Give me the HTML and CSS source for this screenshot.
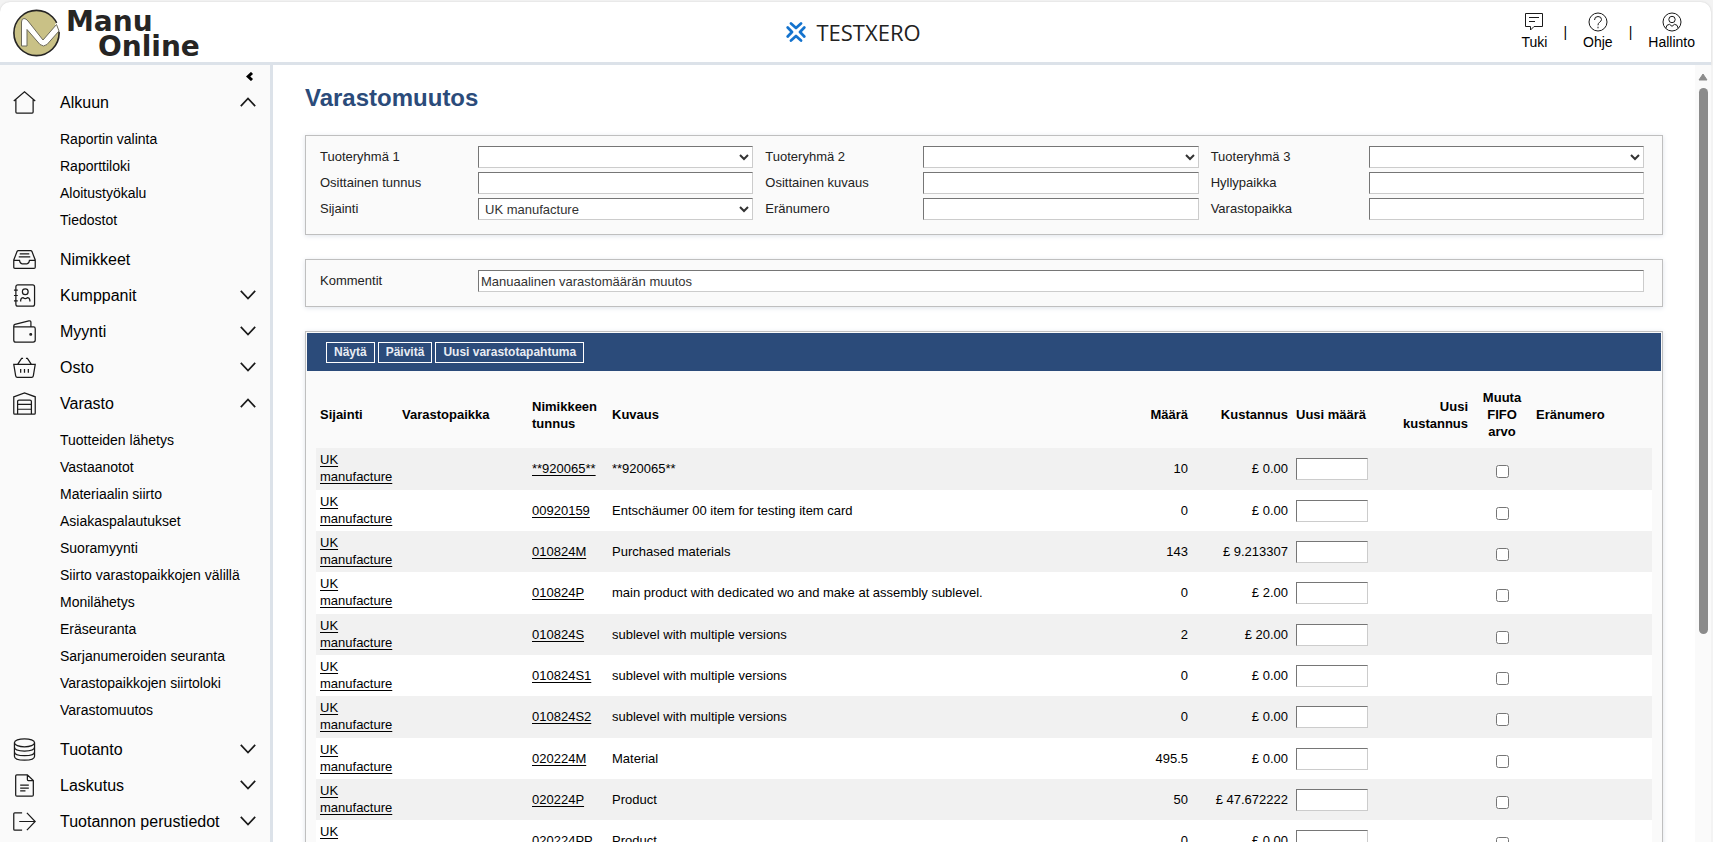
FILE: index.html
```html
<!DOCTYPE html>
<html lang="fi">
<head>
<meta charset="utf-8">
<title>Varastomuutos</title>
<link rel="stylesheet" href="styles.css">
</head>
<body>
<svg class="defs" aria-hidden="true">
  <symbol id="down" viewBox="0 0 16 10"><path d="M.8 .8 8 8.6 15.2 .8"/></symbol>
  <symbol id="up" viewBox="0 0 16 10"><path d="M.8 9.200 8 1.400 15.200 9.200"/></symbol>
</svg>
<div class="app">
  <header class="top">
    <a class="brand" href="#" aria-label="Manu Online">
      <svg width="48" height="48" viewBox="0 0 48 48" aria-hidden="true">
        <circle cx="24.500" cy="24" r="22.600" fill="#c9c186" stroke="#262524" stroke-width="1.600"/>
        <path d="M43 15 49 11V23.500L45 21z" fill="#fff" stroke="none"/>
        <path d="M9.500 37V13Q9.500 9.500 12 9.500 14 9.500 16 12L31 31 44.500 15.500 47 22 35 35.500Q31.500 38.500 28 35.500L15 20.500V37z" fill="#fff" stroke="#6d6a5a" stroke-width="1"/>
      </svg>
      <span class="brand-name"><span>Manu</span><span class="brand-second">Online</span></span>
    </a>
    <div class="company">
      <svg class="company-mark" width="20" height="20" viewBox="0 0 20 20" aria-hidden="true">
        <path d="M5 1.500 10 6 15 1.500M5 18.500 10 14 15 18.500"/>
        <path d="M1.700 5.500 6 10 1.700 14.500M18.300 5.500 14 10 18.300 14.500"/>
      </svg>
      <span>TESTXERO</span>
    </div>
    <nav class="tools">
      <a href="#"><svg width="20" height="20" viewBox="0 0 20 20"><path d="M1.500 1.500h17v13h-8.500L6.500 18v-3.500h-5z"/><path d="M5 5.500h10M5 9.500h6"/></svg>Tuki</a>
      <span>|</span>
      <a href="#"><svg width="20" height="20" viewBox="0 0 20 20"><circle cx="10" cy="10" r="9"/><path d="M6.500 8q0-3.500 3.500-3.500T13.500 7.500Q13.500 9 11.500 10.300 10 11.300 10 13.300M10 14.700v1.600"/></svg>Ohje</a>
      <span>|</span>
      <a href="#"><svg width="20" height="20" viewBox="0 0 20 20"><circle cx="10" cy="10" r="9"/><circle cx="10" cy="7.500" r="3.200"/><path d="M3.800 16.300Q4.300 12.300 7.500 12.300L10 14.300 12.500 12.300Q15.700 12.300 16.200 16.300"/></svg>Hallinto</a>
    </nav>
  </header>
  <div class="body">
    <aside class="side">
      <button class="collapse" aria-label="Piilota valikko"><svg width="8" height="9" viewBox="0 0 8 9"><path d="M6 1 2.200 4.500 6 8"/></svg></button>
      <nav>
        <a class="item" href="#"><svg class="ico" viewBox="0 0 24 24"><path d="M.8 10.500 12 .9 23.200 10.500M3 8.700V22q0 1 1 1H20q1 0 1-1V8.700"/></svg>Alkuun<svg class="chev"><use href="#up"/></svg></a>
        <div class="sub">
          <a href="#">Raportin valinta</a>
          <a href="#">Raporttiloki</a>
          <a href="#">Aloitustyökalu</a>
          <a href="#">Tiedostot</a>
        </div>
        <a class="item" href="#"><svg class="ico" viewBox="0 0 24 24"><path d="M.8 12.500 4.300 3.500Q4.700 2.700 5.500 2.700H18.500Q19.300 2.700 19.700 3.500L23.200 12.500V20Q23.200 21.200 22 21.200H2Q.8 21.200 .8 20zM.8 12.800H6.800Q7.200 16.500 9.500 16.500H14.500Q16.800 16.500 17.200 12.800H23.200"/><path d="M7 6.200h10M6 9.300h12"/></svg>Nimikkeet</a>
        <a class="item" href="#"><svg class="ico" viewBox="0 0 24 24"><rect x="3" y=".8" width="19.500" height="22.400" rx="2"/><path d="M1 6.500h4M1 12h4M1 17.500h4"/><circle cx="12.800" cy="8" r="3"/><path d="M8 18.300v-1.500q.4-2.500 2.600-2.500 2.200 1.700 4.400 0 2.200 0 2.600 2.500v1.500"/></svg>Kumppanit<svg class="chev"><use href="#down"/></svg></a>
        <a class="item" href="#"><svg class="ico" viewBox="0 0 24 24"><path d="M.8 7.300H21.500Q23.200 7.300 23.200 9V20.800Q23.200 23 21 23H3Q.8 23 .8 21V6.300Q.8 5 2 4.600L16.500 .9Q18.700 .6 18.700 2.500V7.300"/><circle cx="18.500" cy="15" r=".9"/></svg>Myynti<svg class="chev"><use href="#down"/></svg></a>
        <a class="item" href="#"><svg class="ico" viewBox="0 0 24 24"><path d="M.8 8.800H23.200L21.200 20.700Q20.900 22.200 19.500 22.200H4.500Q3.100 22.200 2.800 20.700zM5 8.500 9 2.500H10.500M19 8.500 15 2.500H13.500M8 13.500v4M12 13.500v4M16 13.500v4"/></svg>Osto<svg class="chev"><use href="#down"/></svg></a>
        <a class="item" href="#"><svg class="ico" viewBox="0 0 24 24"><path d="M.8 5 12 .9 23.200 5V22.200Q23.200 23.200 22.200 23.200H1.800Q.8 23.200 .8 22.200zM4.800 23V10q0-1.500 1.500-1.500H17.700q1.500 0 1.500 1.500V23M4.800 13h14.400M4.800 18h14.400"/></svg>Varasto<svg class="chev"><use href="#up"/></svg></a>
        <div class="sub">
          <a href="#">Tuotteiden lähetys</a>
          <a href="#">Vastaanotot</a>
          <a href="#">Materiaalin siirto</a>
          <a href="#">Asiakaspalautukset</a>
          <a href="#">Suoramyynti</a>
          <a href="#">Siirto varastopaikkojen välillä</a>
          <a href="#">Monilähetys</a>
          <a href="#">Eräseuranta</a>
          <a href="#">Sarjanumeroiden seuranta</a>
          <a href="#">Varastopaikkojen siirtoloki</a>
          <a href="#">Varastomuutos</a>
        </div>
        <a class="item" href="#"><svg class="ico" viewBox="0 0 24 24"><ellipse cx="12" cy="5" rx="10.500" ry="4.200"/><path d="M1.500 5V19C1.500 24.600 22.500 24.600 22.500 19V5M1.500 9.500C1.500 15.100 22.500 15.100 22.500 9.500M1.500 14.300C1.500 19.900 22.500 19.900 22.500 14.300"/></svg>Tuotanto<svg class="chev"><use href="#down"/></svg></a>
        <a class="item" href="#"><svg class="ico" viewBox="0 0 24 24"><path d="M15 .8H4Q2.800 .8 2.800 2V22Q2.800 23.200 4 23.200H20Q21.200 23.200 21.200 22V6.800zM15 .8V5.800Q15 6.800 16 6.800H21.200M7.500 11.700h9M7.500 14.700h9M7.500 17.700h5.500"/></svg>Laskutus<svg class="chev"><use href="#down"/></svg></a>
        <a class="item" href="#"><svg class="ico" viewBox="0 0 24 24"><path d="M9.500 3H1.800Q.8 3 .8 4V20Q.8 21 1.800 21H9.500M6.500 12H23M14.500 3 23.200 12 14.500 21"/></svg>Tuotannon perustiedot<svg class="chev"><use href="#down"/></svg></a>
      </nav>
    </aside>
    <main class="main">
      <h1>Varastomuutos</h1>
      <form class="panel filters">
        <div class="field"><label for="g1">Tuoteryhmä 1</label><select id="g1"><option></option></select></div>
        <div class="field"><label for="g2">Tuoteryhmä 2</label><select id="g2"><option></option></select></div>
        <div class="field"><label for="g3">Tuoteryhmä 3</label><select id="g3"><option></option></select></div>
        <div class="field"><label for="pt">Osittainen tunnus</label><input type="text" id="pt"></div>
        <div class="field"><label for="pk">Osittainen kuvaus</label><input type="text" id="pk"></div>
        <div class="field"><label for="hp">Hyllypaikka</label><input type="text" id="hp"></div>
        <div class="field"><label for="sj">Sijainti</label><select id="sj"><option>UK manufacture</option></select></div>
        <div class="field"><label for="en">Eränumero</label><input type="text" id="en"></div>
        <div class="field"><label for="vp">Varastopaikka</label><input type="text" id="vp"></div>
      </form>
      <form class="panel">
        <div class="field"><label for="km">Kommentit</label><input type="text" id="km" value="Manuaalinen varastomäärän muutos"></div>
      </form>
      <section class="panel list">
        <div class="bar">
          <button>Näytä</button>
          <button>Päivitä</button>
          <button>Uusi varastotapahtuma</button>
        </div>
        <table>
          <colgroup><col class="c-loc"><col class="c-bin"><col class="c-code"><col><col class="c-num"><col class="c-num"><col class="c-new"><col class="c-num"><col class="c-fifo"><col class="c-batch"></colgroup>
          <thead>
            <tr><th>Sijainti</th><th>Varastopaikka</th><th>Nimikkeen tunnus</th><th>Kuvaus</th><th class="num">Määrä</th><th class="num">Kustannus</th><th>Uusi määrä</th><th class="num">Uusi kustannus</th><th class="mid">Muuta FIFO arvo</th><th>Eränumero</th></tr>
          </thead>
          <tbody>
            <tr><td><a href="#">UK manufacture</a></td><td></td><td><a href="#">**920065**</a></td><td>**920065**</td><td class="num">10</td><td class="num">£ 0.00</td><td><input type="text" aria-label="Uusi määrä"></td><td></td><td><input type="checkbox" aria-label="Muuta FIFO arvo"></td><td></td></tr>
            <tr><td><a href="#">UK manufacture</a></td><td></td><td><a href="#">00920159</a></td><td>Entschäumer 00 item for testing item card</td><td class="num">0</td><td class="num">£ 0.00</td><td><input type="text" aria-label="Uusi määrä"></td><td></td><td><input type="checkbox" aria-label="Muuta FIFO arvo"></td><td></td></tr>
            <tr><td><a href="#">UK manufacture</a></td><td></td><td><a href="#">010824M</a></td><td>Purchased materials</td><td class="num">143</td><td class="num">£ 9.213307</td><td><input type="text" aria-label="Uusi määrä"></td><td></td><td><input type="checkbox" aria-label="Muuta FIFO arvo"></td><td></td></tr>
            <tr><td><a href="#">UK manufacture</a></td><td></td><td><a href="#">010824P</a></td><td>main product with dedicated wo and make at assembly sublevel.</td><td class="num">0</td><td class="num">£ 2.00</td><td><input type="text" aria-label="Uusi määrä"></td><td></td><td><input type="checkbox" aria-label="Muuta FIFO arvo"></td><td></td></tr>
            <tr><td><a href="#">UK manufacture</a></td><td></td><td><a href="#">010824S</a></td><td>sublevel with multiple versions</td><td class="num">2</td><td class="num">£ 20.00</td><td><input type="text" aria-label="Uusi määrä"></td><td></td><td><input type="checkbox" aria-label="Muuta FIFO arvo"></td><td></td></tr>
            <tr><td><a href="#">UK manufacture</a></td><td></td><td><a href="#">010824S1</a></td><td>sublevel with multiple versions</td><td class="num">0</td><td class="num">£ 0.00</td><td><input type="text" aria-label="Uusi määrä"></td><td></td><td><input type="checkbox" aria-label="Muuta FIFO arvo"></td><td></td></tr>
            <tr><td><a href="#">UK manufacture</a></td><td></td><td><a href="#">010824S2</a></td><td>sublevel with multiple versions</td><td class="num">0</td><td class="num">£ 0.00</td><td><input type="text" aria-label="Uusi määrä"></td><td></td><td><input type="checkbox" aria-label="Muuta FIFO arvo"></td><td></td></tr>
            <tr><td><a href="#">UK manufacture</a></td><td></td><td><a href="#">020224M</a></td><td>Material</td><td class="num">495.5</td><td class="num">£ 0.00</td><td><input type="text" aria-label="Uusi määrä"></td><td></td><td><input type="checkbox" aria-label="Muuta FIFO arvo"></td><td></td></tr>
            <tr><td><a href="#">UK manufacture</a></td><td></td><td><a href="#">020224P</a></td><td>Product</td><td class="num">50</td><td class="num">£ 47.672222</td><td><input type="text" aria-label="Uusi määrä"></td><td></td><td><input type="checkbox" aria-label="Muuta FIFO arvo"></td><td></td></tr>
            <tr><td><a href="#">UK manufacture</a></td><td></td><td><a href="#">020224PP</a></td><td>Product</td><td class="num">0</td><td class="num">£ 0.00</td><td><input type="text" aria-label="Uusi määrä"></td><td></td><td><input type="checkbox" aria-label="Muuta FIFO arvo"></td><td></td></tr>
          </tbody>
        </table>
      </section>
    </main>
    <div class="scroll" aria-hidden="true">
      <svg width="10" height="8" viewBox="0 0 10 8"><path d="M5 1 9 7H1z"/></svg>
      <div class="thumb"></div>
    </div>
  </div>
</div>
</body>
</html>
```

FILE: styles.css
```css
* { box-sizing: border-box; }
body {
  margin: 0;
  background: #f3f3f3;
  color: #000;
  font: 13px/17px "Liberation Sans", Arial, sans-serif;
}
a { color: inherit; text-decoration: none; }
svg { flex: none; fill: none; stroke: #1a1a1a; }
.defs { display: none; }

.app {
  display: flex;
  flex-direction: column;
  height: 100vh;
  padding: 2px 2px 0 0;
  overflow: hidden;
}

/* Header */
.top {
  display: grid;
  grid-template-columns: 1fr auto 1fr;
  flex: none;
  height: 63px;
  padding: 0 16px 0 12px;
  background: #fff;
  border-bottom: 3px solid #dce2e9;
  border-radius: 10px 10px 0 0;
  box-shadow: 0 0 2px #ccc;
}
.brand { display: flex; gap: 6px; align-items: flex-start; padding-top: 7px; }
.brand-name {
  display: flex;
  flex-direction: column;
  color: #262524;
  font: bold 28px/25px "DejaVu Sans", sans-serif;
}
.brand-second { padding-left: 32px; }
.company {
  display: flex;
  align-items: center;
  gap: 10px;
  height: 60px;
  color: #222;
  font: 400 22px/30px "Open Sans", sans-serif;
}
.company-mark {
  stroke: #1473ce;
  stroke-width: 2.7;
  stroke-linecap: round;
  stroke-linejoin: round;
}
.tools { display: flex; justify-content: flex-end; gap: 16px; padding-top: 10px; font-size: 14px; }
.tools a { display: flex; flex-direction: column; align-items: center; gap: 2px; }
.tools span { padding-top: 12px; }

/* Layout */
.body { display: flex; flex: 1; min-height: 0; }
.side {
  flex: none;
  width: 273px;
  background: #fafafa;
  border-right: 3px solid #dce2e9;
  overflow: hidden;
}
.collapse {
  display: flex;
  margin-left: auto;
  height: 19px;
  padding: 7px 16px 0 0;
  border: 0;
  background: none;
}
.collapse svg { stroke: #000; stroke-width: 3; }
.item {
  display: flex;
  align-items: center;
  height: 36px;
  padding: 0 14px 0 13px;
  font-size: 16px;
}
.ico { width: 23px; height: 23px; margin-right: 24px; stroke-width: 1.3; }
.chev { width: 16px; height: 10px; margin-left: auto; stroke-width: 1.7; }
.sub { padding: 6px 0 7px 60px; font-size: 14px; line-height: 27px; }
.sub a { display: block; }

.main {
  flex: 1;
  display: flex;
  flex-direction: column;
  gap: 24px;
  padding: 0 32px;
  background: #fff;
  overflow: hidden;
}
h1 { margin: 21px 0 1px; color: #2b4b7a; font-size: 24px; line-height: 24px; }

/* Panels */
.panel {
  flex: none;
  padding: 10px 6px 14px 14px;
  background: #fafafa;
  border: 1px solid #bfbfbf;
  box-shadow: 0 1px 5px #dfe3ea;
}
.filters { display: grid; grid-template-columns: repeat(3, 1fr); row-gap: 4px; }
.field {
  display: grid;
  grid-template-columns: 158px 1fr;
  padding-right: 12px;
  color: #222;
}
.field label { line-height: 22px; }
input[type="text"], select {
  width: 100%;
  height: 22px;
  margin: 0;
  padding: 0 2px;
  background: #fff;
  color: #333;
  border: 1px solid;
  border-color: #767676 #ccc #ccc #767676;
  border-radius: 0;
  font: inherit;
}

/* Stock list */
.list { padding: 1px; min-height: 600px; }
.bar {
  display: flex;
  gap: 3px;
  padding: 9px 19px 8px;
  background: #2b4b7a;
}
.bar button {
  height: 21px;
  padding: 0 7px;
  background: none;
  border: 1px solid #fff;
  color: #e8ecf3;
  font: bold 12px/17px "Liberation Sans", Arial, sans-serif;
}
.list table {
  width: calc(100% - 18px);
  margin: 10px 9px 0;
  table-layout: fixed;
  border-collapse: collapse;
}
.c-loc { width: 82px; }
.c-bin { width: 130px; }
.c-code { width: 80px; }
.c-num { width: 100px; }
.c-new { width: 80px; }
.c-fifo { width: 60px; }
.c-batch { width: 120px; }
th { padding: 8px 4px; text-align: left; }
td { padding: 3px 4px 4px; background: #fff; }
tbody tr:nth-child(3n+1) td { padding-bottom: 5px; }
tbody tr:nth-child(odd) td { background: #f1f1f1; }
td a { text-decoration: underline; text-underline-offset: 2px; }
th.num, td.num { text-align: right; }
th.mid { text-align: center; }
td input { display: block; }
td input[type="text"] { margin-top: 2px; }
td input[type="checkbox"] { width: 13px; height: 13px; margin: 6px auto 0; }

/* Scroll track */
.scroll {
  display: flex;
  flex-direction: column;
  align-items: center;
  gap: 7px;
  width: 16px;
  padding-top: 8px;
  background: #fafafa;
}
.scroll svg { fill: #8b8b8b; stroke: #8b8b8b; stroke-linejoin: round; }
.thumb { width: 9px; height: 71%; border-radius: 5px; background: #8b8b8b; }
```
